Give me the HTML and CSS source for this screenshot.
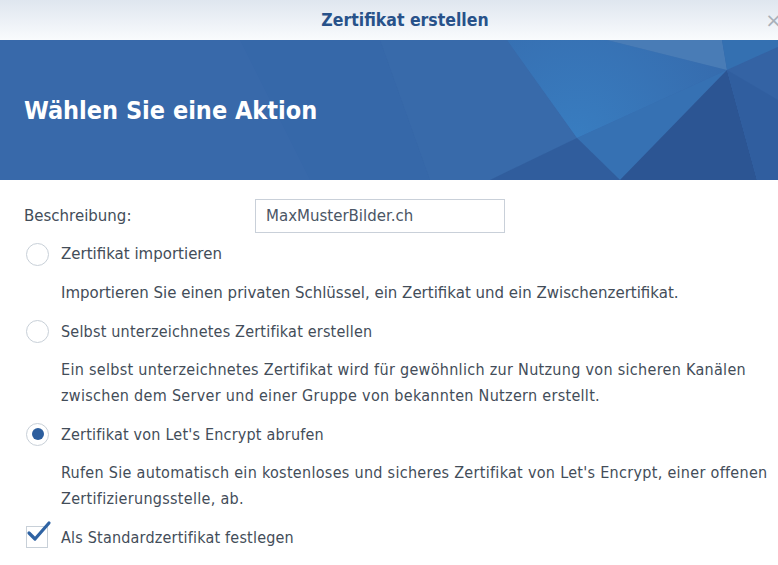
FILE: index.html
```html
<!DOCTYPE html>
<html lang="de">
<head>
    <meta charset="UTF-8">
    <meta name="viewport" content="width=device-width, initial-scale=1.0">
    <title>Zertifikat erstellen</title>
    <link rel="stylesheet" href="styles.css">
</head>
<body>
    <div class="dialog">
        <div class="titlebar">
            <span class="title">Zertifikat erstellen</span>
            <span class="close">&times;</span>
        </div>

        <div class="banner">
            <!-- facetted background on the right of the banner -->
            <svg class="facets" width="778" height="140" viewBox="0 40 778 140" preserveAspectRatio="none">
                <defs>
                    <radialGradient id="glow" cx="577" cy="138" r="160" gradientUnits="userSpaceOnUse">
                        <stop offset="0" stop-color="#3a88cc" stop-opacity="0.6"/>
                        <stop offset="1" stop-color="#3a88cc" stop-opacity="0"/>
                    </radialGradient>
                </defs>
                <polygon points="240,40 310,180 430,180 380,40" fill="#3566a8" opacity="0.4"/>
                <polygon points="380,40 430,180 490,180 577,138 507,40" fill="#3a6cab" opacity="0.4"/>
                <polygon points="507,40 577,138 727,70 607,40" fill="#3571b3" opacity="0.4"/>
                <polygon points="507,40 577,138 727,70 607,40" fill="url(#glow)"/>
                <polygon points="607,40 722,40 727,70" fill="#4c80b9" opacity="0.85"/>
                <polygon points="722,40 778,40 778,47 727,70" fill="#3470b1"/>
                <polygon points="577,138 727,70 620,180" fill="#3675b6" opacity="0.7"/>
                <polygon points="577,138 620,180 490,180" fill="#305c9b" opacity="0.9"/>
                <polygon points="727,70 757,180 620,180" fill="#2c5593"/>
                <polygon points="727,70 778,47 778,180 757,180" fill="#3463a4"/>
                <polygon points="727,70 778,100 778,180 757,180" fill="#2f5c9d" opacity="0.6"/>
            </svg>
            <h1>Wählen Sie eine Aktion</h1>
        </div>

        <div class="content">
            <div class="field">
                <label class="field-label">Beschreibung:</label>
                <div class="input">MaxMusterBilder.ch</div>
            </div>

            <div class="option">
                <span class="radio"></span>
                <span class="option-label">Zertifikat importieren</span>
            </div>
            <p class="hint hint-small">Importieren Sie einen privaten Schlüssel, ein Zertifikat und ein Zwischenzertifikat.</p>

            <div class="option condensed">
                <span class="radio"></span>
                <span class="option-label">Selbst unterzeichnetes Zertifikat erstellen</span>
            </div>
            <p class="hint">Ein selbst unterzeichnetes Zertifikat wird für gewöhnlich zur Nutzung von sicheren Kanälen<br>zwischen dem Server und einer Gruppe von bekannten Nutzern erstellt.</p>

            <div class="option condensed">
                <span class="radio checked"></span>
                <span class="option-label">Zertifikat von Let's Encrypt abrufen</span>
            </div>
            <p class="hint">Rufen Sie automatisch ein kostenloses und sicheres Zertifikat von Let's Encrypt, einer offenen<br>Zertifizierungsstelle, ab.</p>

            <div class="option condensed">
                <span class="checkbox">
                    <svg width="26" height="24" viewBox="0 0 26 24">
                        <path d="M3 13 L9 19 L23 3" fill="none" stroke="#2f63a3" stroke-width="3.2" stroke-linecap="round" stroke-linejoin="round"/>
                    </svg>
                </span>
                <span class="option-label">Als Standardzertifikat festlegen</span>
            </div>
        </div>
    </div>
</body>
</html>
```

FILE: styles.css
```css
body {
    margin: 0;
    background: #fff;
    font-family: "DejaVu Sans", Verdana, sans-serif;
    color: #434d59;
}
.dialog {
    width: 778px;
    height: 565px;
    overflow: hidden;
    background: #fff;
}
.titlebar {
    position: relative;
    height: 40px;
    display: flex;
    align-items: center;
    justify-content: center;
    background: linear-gradient(#dfe6ef, #f9fbfd);
}
.title {
    margin-left: 32px;
    font-family: "DejaVu Sans Condensed", "DejaVu Sans", sans-serif;
    font-weight: bold;
    font-size: 17.5px;
    color: #28528a;
}
.close {
    position: absolute;
    right: -4px;
    top: 8px;
    font-size: 20px;
    color: #a9b1ba;
}
.banner {
    position: relative;
    height: 140px;
    display: flex;
    align-items: center;
    padding-left: 24px;
    background: #3869aa;
    overflow: hidden;
}
.facets {
    position: absolute;
    left: 0;
    top: 0;
}
.banner h1 {
    position: relative;
    margin: 0;
    font-family: "DejaVu Sans Condensed", "DejaVu Sans", sans-serif;
    font-size: 25px;
    font-weight: bold;
    color: #fff;
}
.content {
    padding: 19px 0 0 24px;
}
.field {
    display: flex;
    align-items: center;
    height: 34px;
    margin-bottom: 2px;
}
.field-label {
    width: 231px;
    font-size: 15px;
}
.input {
    box-sizing: border-box;
    width: 250px;
    height: 34px;
    padding: 0 10px;
    display: flex;
    align-items: center;
    border: 1px solid #c9d0d9;
    font-size: 15px;
    color: #4b5665;
}
.option {
    display: flex;
    align-items: center;
    height: 38px;
    font-size: 15px;
}
.option.condensed {
    font-family: "DejaVu Sans Condensed", "DejaVu Sans", sans-serif;
    font-size: 16px;
    letter-spacing: 0.2px;
}
.radio {
    box-sizing: border-box;
    width: 23px;
    height: 23px;
    margin: 0 12px 0 2px;
    border: 1.5px solid #c8d0d8;
    border-radius: 50%;
    display: flex;
    align-items: center;
    justify-content: center;
}
.radio.checked::after {
    content: "";
    width: 12px;
    height: 12px;
    border-radius: 50%;
    background: #2c5e9e;
}
.checkbox {
    position: relative;
    box-sizing: border-box;
    width: 22px;
    height: 22px;
    margin: 0 13px 0 2px;
    border: 1.5px solid #c8d0d8;
}
.checkbox svg {
    position: absolute;
    left: -1px;
    top: -7px;
}
.hint {
    margin: 7px 0 6px 37px;
    font-family: "DejaVu Sans Condensed", "DejaVu Sans", sans-serif;
    font-size: 16px;
    letter-spacing: 0.3px;
    line-height: 26px;
    white-space: nowrap;
}
.hint-small {
    font-family: "DejaVu Sans", sans-serif;
    font-size: 15px;
    letter-spacing: 0;
}
```
